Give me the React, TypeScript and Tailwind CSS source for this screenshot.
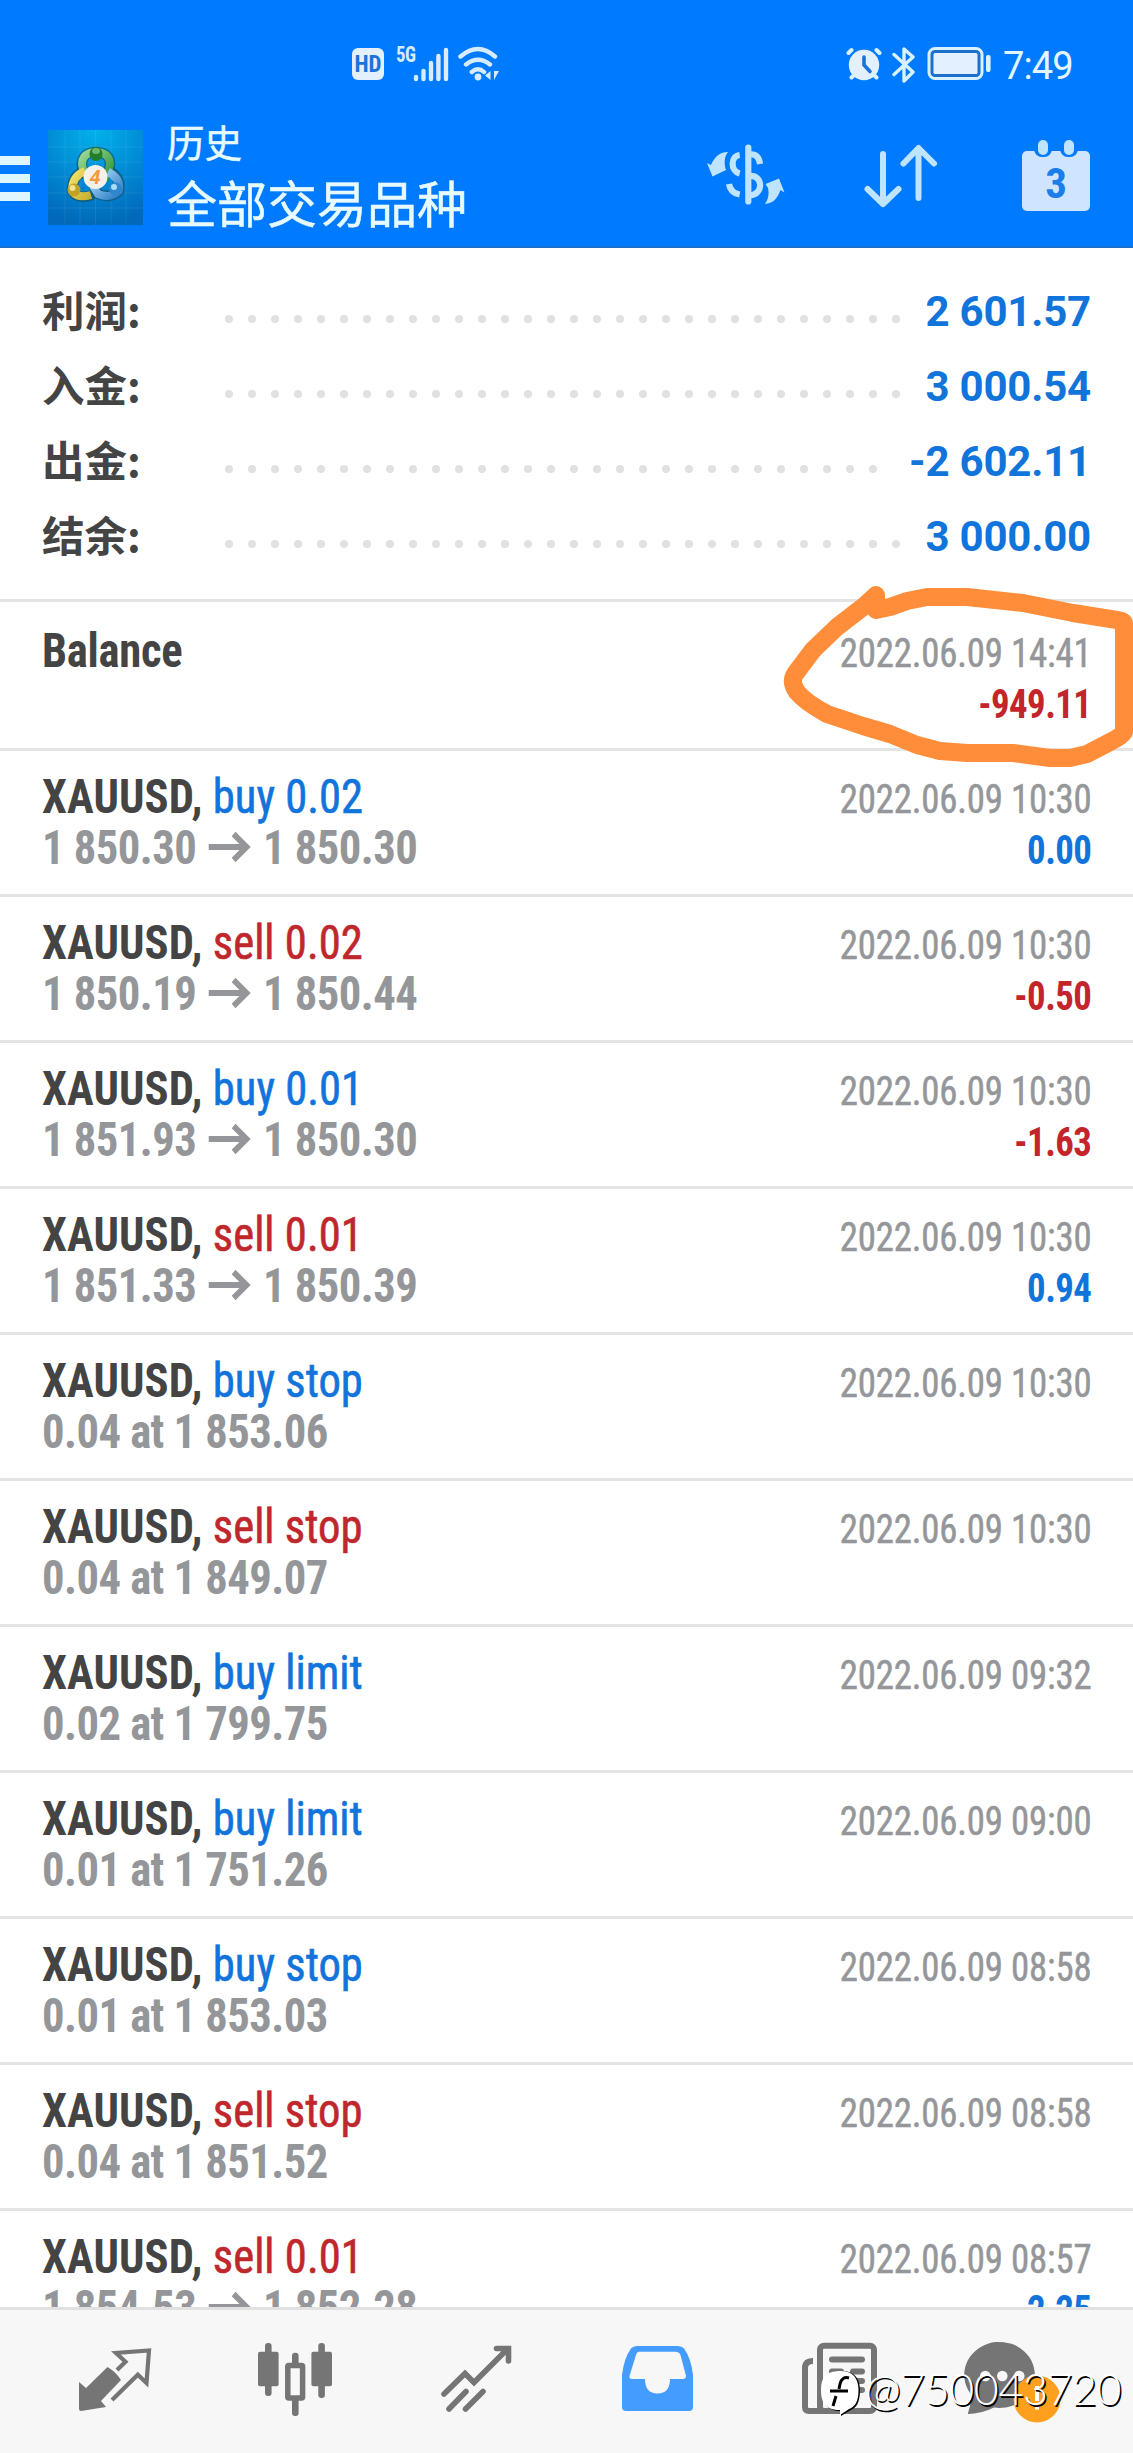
const summary = [
  { label: '利润:', value: '2 601.57', dots: 30 },
  { label: '入金:', value: '3 000.54', dots: 30 },
  { label: '出金:', value: '-2 602.11', dots: 29 },
  { label: '结余:', value: '3 000.00', dots: 30 },
]

type Deal = {
  type: string
  from?: string
  to?: string
  detail?: string
  time: string
  profit?: string
}

const deals: Deal[] = [
  { type: 'buy 0.02', from: '1 850.30', to: '1 850.30', time: '2022.06.09 10:30', profit: '0.00' },
  { type: 'sell 0.02', from: '1 850.19', to: '1 850.44', time: '2022.06.09 10:30', profit: '-0.50' },
  { type: 'buy 0.01', from: '1 851.93', to: '1 850.30', time: '2022.06.09 10:30', profit: '-1.63' },
  { type: 'sell 0.01', from: '1 851.33', to: '1 850.39', time: '2022.06.09 10:30', profit: '0.94' },
  { type: 'buy stop', detail: '0.04 at 1 853.06', time: '2022.06.09 10:30' },
  { type: 'sell stop', detail: '0.04 at 1 849.07', time: '2022.06.09 10:30' },
  { type: 'buy limit', detail: '0.02 at 1 799.75', time: '2022.06.09 09:32' },
  { type: 'buy limit', detail: '0.01 at 1 751.26', time: '2022.06.09 09:00' },
  { type: 'buy stop', detail: '0.01 at 1 853.03', time: '2022.06.09 08:58' },
  { type: 'sell stop', detail: '0.04 at 1 851.52', time: '2022.06.09 08:58' },
  { type: 'sell 0.01', from: '1 854.53', to: '1 852.28', time: '2022.06.09 08:57', profit: '2.25' },
]

function StatusBar() {
  return (
    <div className="flex h-[128px] items-start pl-[352px] pr-[60px] pt-[42px]">
      <div className="mt-[6px] flex h-[32px] w-[32px] items-center justify-center rounded-[6px] bg-[#e3f0ff] font-['Roboto_Condensed'] text-[23px] font-bold leading-none text-[#1a74d6]">
        HD
      </div>
      <div className="ml-[12px] mt-[3px] w-[17px] origin-left scale-x-[0.85] font-['Roboto_Condensed'] text-[22px] font-bold leading-[20px] tracking-[-0.500px] text-[#d8ecff]">
        5G
      </div>
      <svg className="mt-[4px]" width="36" height="36" fill="none" stroke="#d8ecff" strokeWidth="4.4" strokeLinecap="round">
        <path d="M3 31v2M10.500 25v8M18 17v16M25.400 10v23M33 4v29" />
      </svg>
      <svg className="ml-[8px] mt-[4px]" width="44" height="36" fill="none" stroke="#d8ecff" strokeWidth="4.4" strokeLinecap="round">
        <path d="M3.500 10.500Q21 -4.500 38 10.500M9 18.500Q21 9 33 18.500M14.800 26Q21 20.500 27 26" />
        <circle cx="21" cy="31" r="3.400" fill="#d8ecff" stroke="none" />
        <path d="M33.500 25v9l-5.500-4.500zM36 25v9zM37 25h5l-5 9z" fill="#d8ecff" stroke="none" />
      </svg>
      <svg className="ml-auto mt-[4px]" width="36" height="36" fill="none" strokeLinecap="round">
        <circle cx="18" cy="19" r="15.200" fill="#e3f0ff" />
        <path d="M2.500 7l3-3M33.500 7l-3-3M5.500 31.500l3-3M30.500 31.500l-3-3" stroke="#d8f2ff" strokeWidth="4" />
        <path d="M18 11v8l6 6.500" stroke="#1a74d6" strokeWidth="3.600" />
      </svg>
      <svg className="ml-[10px] mt-[2px]" width="24" height="40" fill="none" stroke="#d8f2ff" strokeWidth="3.400" strokeLinejoin="round" strokeLinecap="round">
        <path d="M2 10.500l19 17.500-9 9V5l9 8-19 17.500" />
      </svg>
      <svg className="ml-[11px] mt-[4px]" width="66" height="36">
        <rect x="2" y="2.500" width="53" height="30" rx="6" fill="#1a70cc" stroke="#d8f2ff" strokeWidth="3" />
        <rect x="6.500" y="7" width="44" height="21" rx="1.500" fill="#e3f0ff" />
        <rect x="59" y="9" width="4.600" height="17" rx="2" fill="#d8f2ff" />
      </svg>
      <div className="ml-[10px] w-[70px] font-['Roboto'] text-[38px] leading-[48px] tracking-[-0.900px] text-[#e3f6ff]">7:49</div>
    </div>
  )
}

function Logo() {
  return (
    <svg className="ml-[18px] mt-[2px]" width="95" height="95" viewBox="0 0 95 95">
      <defs>
        <radialGradient id="sky" cx="0.5" cy="0" r="1">
          <stop offset="0" stopColor="#02b2ea" />
          <stop offset="0.5" stopColor="#018dd6" />
          <stop offset="1" stopColor="#0069b9" />
        </radialGradient>
        <linearGradient id="green" x1="0" y1="0" x2="1" y2="1">
          <stop offset="0" stopColor="#9bd994" />
          <stop offset="1" stopColor="#2c9138" />
        </linearGradient>
        <linearGradient id="yellow" x1="0" y1="0" x2="1" y2="1">
          <stop offset="0" stopColor="#f3e46c" />
          <stop offset="1" stopColor="#c8ae2c" />
        </linearGradient>
        <linearGradient id="blue" x1="0" y1="0" x2="1" y2="1">
          <stop offset="0" stopColor="#b4e2fa" />
          <stop offset="1" stopColor="#2a7cc6" />
        </linearGradient>
      </defs>
      <rect width="95" height="95" fill="url(#sky)" />
      <path d="M17 0v95M32 0v95M47.500 0v95M63 0v95M78 0v95M0 17h95M0 32h95M0 47h95M0 63h95M0 78h95" stroke="#fff" strokeOpacity="0.08" />
      <g fill="none">
        <g stroke="#14506a" strokeOpacity="0.7" strokeWidth="10.500" strokeLinecap="round">
          <path d="M36.500 44C29 28 39 22 48 22S67 28 59 44" />
          <path d="M34 42Q24 47 24 61Q30 69 42 66" />
          <path d="M63 42Q73 48 71 61Q62 69 50 64L46 56" />
        </g>
        <path d="M37 44C29 28 39 22 48 22S67 28 59 44L56 50" stroke="url(#green)" strokeWidth="8" />
        <path d="M37 41Q24 46 24 61Q30 69 43 65" stroke="url(#yellow)" strokeWidth="8" />
        <path d="M60 42Q73 48 71 61Q62 69 50 64L45 56" stroke="url(#blue)" strokeWidth="8" />
      </g>
      <ellipse cx="48" cy="24" rx="6.500" ry="7" fill="#237d2d" />
      <ellipse cx="48" cy="21" rx="4" ry="3" fill="#6fb76a" />
      <circle cx="26" cy="60" r="6.500" fill="#c0a226" />
      <circle cx="24.500" cy="58" r="3" fill="#f2e28a" />
      <circle cx="67.500" cy="59" r="6.500" fill="#2f86cc" />
      <circle cx="66" cy="57" r="3" fill="#a8dcf8" />
      <circle cx="47.500" cy="47" r="12" fill="#f4f1ea" />
      <text x="47" y="54" textAnchor="middle" fontFamily="Roboto" fontSize="20" fontWeight="700" fontStyle="italic" fill="#f39a3c">4</text>
    </svg>
  )
}

function Header() {
  return (
    <header className="h-[248px] shrink-0 border-b-2 border-[#1a70cc] bg-[#007aff]">
      <StatusBar />
      <div className="flex items-start">
        <div className="mt-[28px] flex w-[30px] flex-col gap-[9px]">
          <div className="h-[9px] bg-[#e0f6ff]" />
          <div className="h-[9px] bg-[#e0f6ff]" />
          <div className="h-[9px] bg-[#e0f6ff]" />
        </div>
        <Logo />
        <div className="ml-[24px] mt-[-11px] font-['Noto_Sans_CJK_SC',sans-serif] text-[#e6faff] [-webkit-text-stroke:0.5px_#e6faff]">
          <div className="text-[37.500px] leading-[48px]">历史</div>
          <div className="mt-[3px] text-[50px] leading-[66px]">全部交易品种</div>
        </div>
        <svg className="ml-auto mt-[2px]" width="110" height="90" fill="none" stroke="#bfe4ff" strokeWidth="6.200">
          <path d="M48.300 17.500v54" strokeLinecap="round" />
          <path d="M39.700 25C30.500 26 30 41 39.700 43.500M29 54C30 61 34 63.500 39.700 64.500" />
          <path d="M50 24.500C56 24 59 27 60 34M50 46C63 45 64 64 50 65.500" />
          <path d="M28 22C24 27 24 34 26 40L12.500 46.500L7 33L11 35C15 26 20 22 28 22z" fill="#bfe4ff" stroke="none" />
          <path d="M65 74C69 68 69 63 68 58L65.500 54L79 48.500L84.500 62.500L80.500 60C77 69 73 73.500 65 74z" fill="#bfe4ff" stroke="none" />
        </svg>
        <svg className="ml-[50px] mt-[12px]" width="84" height="70" fill="none" stroke="#bfe4ff" strokeWidth="6" strokeLinecap="round" strokeLinejoin="round">
          <path d="M23 14v50M7.500 49L23 64L38.500 49M58.500 58V9M43.500 23.500L58.500 8L74 23.500" />
        </svg>
        <svg className="ml-[74px] mr-[42px] mt-[10px]" width="73" height="76">
          <rect x="4" y="13" width="68" height="60" rx="5" fill="#cfe5ff" />
          <rect x="16" y="-6" width="18" height="25" rx="8" fill="#007aff" />
          <rect x="42" y="-6" width="18" height="25" rx="8" fill="#007aff" />
          <rect x="20" y="2" width="10" height="15" rx="5" fill="#bfe4ff" />
          <rect x="46" y="2" width="10" height="15" rx="5" fill="#bfe4ff" />
          <text x="38" y="60" textAnchor="middle" fontFamily="Roboto Condensed" fontSize="43" fontWeight="700" fill="#1a7eea">3</text>
        </svg>
      </div>
    </header>
  )
}

function Row({ deal }: { deal: Deal }) {
  const typeColor = deal.type.startsWith('buy') ? 'text-[#1174db]' : 'text-[#bf272c]'
  const profitColor = deal.profit?.startsWith('-') ? 'text-[#c4252b]' : 'text-[#1174db]'
  return (
    <div className="flex h-[146px] shrink-0 justify-between border-b-[3px] border-[#e4e4e4] pl-[42px] pr-[42px] pt-[20px]">
      <div className="origin-left scale-x-[0.93] text-[48px] font-bold leading-[51px]">
        <div className="tracking-[0.100px]">
          XAUUSD, <span className={`font-normal tracking-normal [-webkit-text-stroke:0.6px] ${typeColor}`}>{deal.type}</span>
        </div>
        {deal.detail ? (
          <div className="tracking-[-0.600px] text-[#949699]">{deal.detail}</div>
        ) : (
          <div className="flex tracking-[-0.600px] text-[#949699]">
            {deal.from}
            <svg className="mx-[13px] mt-[8px]" width="46" height="34" fill="none" stroke="#949699" strokeWidth="6">
              <path d="M0 17h41M27 4l14 13l-14 13" />
            </svg>
            {deal.to}
          </div>
        )}
      </div>
      <div className="origin-right scale-x-[0.92] pt-[3px] text-right text-[40px] leading-[51px]">
        <div className="tracking-[-0.200px] text-[#949699] [-webkit-text-stroke:0.5px]">{deal.time}</div>
        <div className={`font-bold tracking-[-0.600px] ${profitColor}`}>{deal.profit}</div>
      </div>
    </div>
  )
}

function TabBar() {
  return (
    <nav className="flex h-[146px] shrink-0 border-t-[3px] border-[#e1e1e1] bg-[#f7f7f7] pl-[24px] pr-[23px] pt-[20px] *:flex *:w-0 *:flex-1 *:justify-center">
      <div>
        <svg width="100" height="100">
          <path d="M14 52L21 58L42.500 37Q51 42 56 50L36 71L41 77L16 81Q14 81 14 79z" fill="#757575" />
          <path d="M52 40L60.500 31.700L51 23L84 20.500L81.500 53L72.800 44.700L47 70" fill="none" stroke="#757575" strokeWidth="4.200" />
        </svg>
      </div>
      <div>
        <svg width="100" height="100" fill="#757575">
          <rect x="12" y="21.700" width="20.600" height="34.500" rx="2" />
          <rect x="19" y="13" width="6.600" height="53" rx="3" />
          <rect x="41.800" y="35.500" width="14.800" height="32.500" rx="1" fill="#f7f7f7" stroke="#757575" strokeWidth="5.500" />
          <rect x="46" y="22.700" width="6.600" height="13" rx="3" />
          <rect x="46" y="68" width="6.600" height="18" rx="3" />
          <rect x="65.400" y="21.700" width="20.600" height="34.500" rx="2" />
          <rect x="72.300" y="13" width="6.600" height="55" rx="3" />
        </svg>
      </div>
      <div>
        <svg width="100" height="100" fill="none" stroke="#757575" strokeWidth="5.600" strokeLinecap="round">
          <path d="M17 64L38 43.500L47 52.500L80 19.500M69.500 18.500H81.500V31M22 79L39 61.500M38.500 79L56 61.500" />
        </svg>
      </div>
      <div>
        <svg width="100" height="100">
          <path d="M14 45Q16 28 23 18.500Q25 16 29 16H70Q74 16 76 18.500Q83 28 85 45V77Q85 81 81 81H18Q14 81 14 77z" fill="#459cff" />
          <path d="M31 21.700H67Q71 21.700 72.500 25L78 46Q78 49 75 49H62Q62 63.500 49.500 63.500T37 49H24Q21 49 21.500 46L28 25Q29 21.700 31 21.700z" fill="#f7f7f7" />
        </svg>
      </div>
      <div>
        <svg width="100" height="100" fill="none" stroke="#757575" strokeWidth="6">
          <path d="M24 31Q16 31 16 38V77Q16 81 20 81H34" />
          <rect x="31" y="15.700" width="54" height="65.300" rx="4" />
          <path d="M43 29.500h30M43 41.500h9M64 41.500h9M64 51h9M64 60h9" strokeLinecap="round" />
        </svg>
      </div>
      <div>
        <svg className="shrink-0" width="118" height="100">
          <path d="M7 83Q11 73 9 63A35.300 33 0 1 1 33 77.500Q20 84 7 84z" fill="#757575" />
          <circle cx="24.300" cy="46" r="5.300" fill="#f7f7f7" />
          <circle cx="41.300" cy="46" r="5.300" fill="#f7f7f7" />
          <circle cx="58.300" cy="46" r="5.300" fill="#f7f7f7" />
          <circle cx="76" cy="69" r="23.500" fill="#ff9f1e" />
          <path d="M76 56v15M76 75.500v4" stroke="#fff" strokeWidth="4" />
        </svg>
      </div>
    </nav>
  )
}

function Watermark() {
  return (
    <div className="absolute left-[820px] top-[2365px] flex items-start">
      <svg width="42" height="54">
        <path d="M19 6C33 5 40 12 40 25C40 38 36 43 31 45L21 51V46C7 46 2 38 2 25C2 12 7 7 19 6z" fill="#000" />
        <path d="M18 6C32 5 38.500 12 38.500 25C38.500 38 34 42 29 44L20 50V45C6 45 1 38 1 25C1 12 6 7 18 6z" fill="#fff" />
        <path d="M29 13Q22 11 20 19L19 24M16 31L13 41M10 26H28" fill="none" stroke="#000" strokeWidth="3" />
      </svg>
      <div className="ml-[3px] mt-[-3px] font-['Lato'] text-[43px] font-light leading-[54px] tracking-[-0.400px] text-white [text-shadow:1.5px_1.5px_0_#000]">
        @750043720
      </div>
    </div>
  )
}

export default function App() {
  return (
    <main className="relative flex h-[2453px] w-[1133px] flex-col overflow-hidden bg-white font-['Roboto_Condensed'] text-[#444]">
      <Header />
      <section className="flex h-[354px] shrink-0 flex-col border-b-[3px] border-[#e4e4e4] pl-[42px] pr-[42px] pt-[26px]">
        {summary.map((item) => (
          <div key={item.label} className="flex h-[75px] items-center">
            <div className="mt-[-6px] w-[183px] font-['Noto_Sans_CJK_SC',sans-serif] text-[42.500px] font-bold leading-[75px]">
              {item.label}
            </div>
            <div className="mt-[14px] flex gap-[15px]">
              {Array.from({ length: item.dots }, (_, i) => (
                <span key={i} className="size-[8px] rounded-full bg-[#e1e1e1]" />
              ))}
            </div>
            <div className="ml-auto font-['Roboto'] text-[42px] font-bold leading-[75px] tracking-[-0.200px] text-[#1174db]">{item.value}</div>
          </div>
        ))}
      </section>
      <section className="flex min-h-0 flex-1 flex-col overflow-hidden">
        <div className="flex h-[149px] shrink-0 justify-between border-b-[3px] border-[#e4e4e4] pl-[42px] pr-[42px] pt-[23px]">
          <div className="origin-left scale-x-[0.93] text-[48px] font-bold leading-[51px] tracking-[-0.300px]">Balance</div>
          <div className="origin-right scale-x-[0.92] pt-[3px] text-right text-[40px] leading-[51px]">
            <div className="tracking-[-0.200px] text-[#949699] [-webkit-text-stroke:0.5px]">2022.06.09 14:41</div>
            <div className="font-bold tracking-[-0.600px] text-[#c4252b]">-949.11</div>
          </div>
        </div>
        {deals.map((deal, i) => (
          <Row key={i} deal={deal} />
        ))}
      </section>
      <TabBar />

      {/* hand-drawn marker around the balance entry */}
      <svg className="absolute left-[770px] top-[570px]" width="363" height="210" fill="none" stroke="#ff8d3a" strokeWidth="18" strokeLinecap="round" strokeLinejoin="round">
        <path d="M106 25L93 37L67 57L43 80L25 104Q20 112 27 122Q35 132 57 144L93 156L120 164L147 175L170 181L197 183L243 183L280 188L300 188L317 184L340 172Q352 166 354 162V54Q354 51 347 50L303 43L253 33L197 27H157L137 31L120 37L106 40z" />
      </svg>
      <Watermark />
    </main>
  )
}
